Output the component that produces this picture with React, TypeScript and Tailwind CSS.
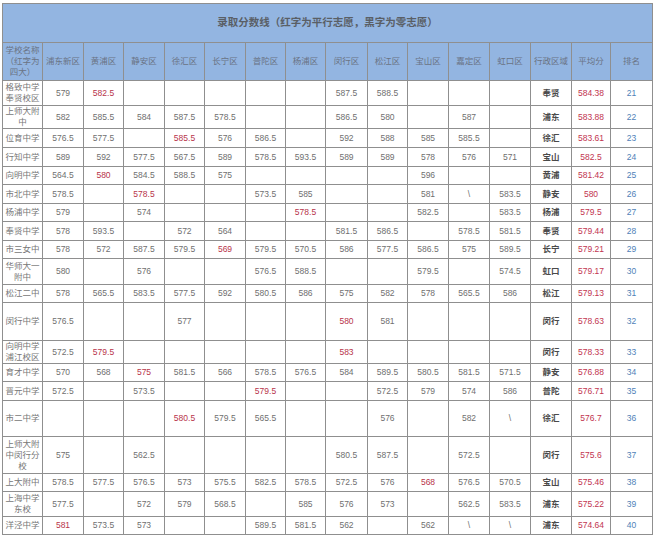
const districts = ['浦东新区', '黄浦区', '静安区', '徐汇区', '长宁区', '普陀区', '杨浦区', '闵行区', '松江区', '宝山区', '嘉定区', '虹口区'];

const colWidths = ['w-[40px]', 'w-[41px]', 'w-[40px]', 'w-[41px]', 'w-[40px]', 'w-[41px]', 'w-[40px]', 'w-[40px]', 'w-[42px]', 'w-[40px]', 'w-[41px]', 'w-[41px]', 'w-[41px]', 'w-[41px]', 'w-[39px]', 'w-[42px]'];

interface Row {
    name: string;
    h: string;
    cells: string[];
    area: string;
    avg: string;
    rank: number;
}

// "r" prefix = red (平行志愿)
const rows: Row[] = [
    { name: '格致中学奉贤校区', h: 'h-[25px]', cells: ['579', 'r582.5', '', '', '', '', '', '587.5', '588.5', '', '', ''], area: '奉贤', avg: '584.38', rank: 21 },
    { name: '上师大附中', h: 'h-[23px]', cells: ['582', '585.5', '584', '587.5', '578.5', '', '', '586.5', '580', '', '587', ''], area: '浦东', avg: '583.88', rank: 22 },
    { name: '位育中学', h: 'h-[19px]', cells: ['576.5', '577.5', '', 'r585.5', '576', '586.5', '', '592', '588', '585', '585.5', ''], area: '徐汇', avg: '583.61', rank: 23 },
    { name: '行知中学', h: 'h-[19px]', cells: ['589', '592', '577.5', '567.5', '589', '578.5', '593.5', '589', '589', '578', '576', '571'], area: '宝山', avg: '582.5', rank: 24 },
    { name: '向明中学', h: 'h-[18px]', cells: ['564.5', 'r580', '584.5', '588.5', '575', '', '', '', '', '596', '', ''], area: '黄浦', avg: '581.42', rank: 25 },
    { name: '市北中学', h: 'h-[19px]', cells: ['578.5', '', 'r578.5', '', '', '573.5', '585', '', '', '581', '\\', '583.5'], area: '静安', avg: '580', rank: 26 },
    { name: '杨浦中学', h: 'h-[18px]', cells: ['579', '', '574', '', '', '', 'r578.5', '', '', '582.5', '', '583.5'], area: '杨浦', avg: '579.5', rank: 27 },
    { name: '奉贤中学', h: 'h-[19px]', cells: ['578', '593.5', '', '572', '564', '', '', '581.5', '586.5', '', '578.5', '581.5'], area: '奉贤', avg: '579.44', rank: 28 },
    { name: '市三女中', h: 'h-[18px]', cells: ['578', '572', '587.5', '579.5', 'r569', '579.5', '570.5', '586', '577.5', '586.5', '575', '589.5'], area: '长宁', avg: '579.21', rank: 29 },
    { name: '华师大一附中', h: 'h-[26px]', cells: ['580', '', '576', '', '', '576.5', '588.5', '', '', '579.5', '', '574.5'], area: '虹口', avg: '579.17', rank: 30 },
    { name: '松江二中', h: 'h-[18px]', cells: ['578', '565.5', '583.5', '577.5', '592', '580.5', '586', '575', '582', '578', '565.5', '586'], area: '松江', avg: '579.13', rank: 31 },
    { name: '闵行中学', h: 'h-[38px]', cells: ['576.5', '', '', '577', '', '', '', 'r580', '581', '', '', ''], area: '闵行', avg: '578.63', rank: 32 },
    { name: '向明中学浦江校区', h: 'h-[22px]', cells: ['572.5', 'r579.5', '', '', '', '', '', 'r583', '', '', '', ''], area: '闵行', avg: '578.33', rank: 33 },
    { name: '育才中学', h: 'h-[18px]', cells: ['570', '568', 'r575', '581.5', '566', '578.5', '576.5', '584', '589.5', '580.5', '581.5', '571.5'], area: '静安', avg: '576.88', rank: 34 },
    { name: '晋元中学', h: 'h-[19px]', cells: ['572.5', '', '573.5', '', '', 'r579.5', '', '', '572.5', '579', '574', '586'], area: '普陀', avg: '576.71', rank: 35 },
    { name: '市二中学', h: 'h-[36px]', cells: ['', '', '', 'r580.5', '579.5', '565.5', '', '', '576', '', '582', '\\'], area: '徐汇', avg: '576.7', rank: 36 },
    { name: '上师大附中闵行分校', h: 'h-[37px]', cells: ['575', '', '562.5', '', '', '', '', '580.5', '587.5', '', '572.5', ''], area: '闵行', avg: '575.6', rank: 37 },
    { name: '上大附中', h: 'h-[18px]', cells: ['578.5', '577.5', '576.5', '573', '575.5', '582.5', '578.5', '572.5', '576', 'r568', '576.5', '570.5'], area: '宝山', avg: '575.46', rank: 38 },
    { name: '上海中学东校', h: 'h-[25px]', cells: ['577.5', '', '572', '579', '568.5', '', '585', '576', '573', '', '562.5', '583.5'], area: '浦东', avg: '575.22', rank: 39 },
    { name: '洋泾中学', h: 'h-[18px]', cells: ['r581', '573.5', '573', '', '', '589.5', '581.5', '562', '', '562', '\\', '\\'], area: '浦东', avg: '574.64', rank: 40 },
];

const cell = 'border border-[#8f8f8f] p-0 text-center align-middle';

export default function App() {
    return (
        <div className="min-h-[536px] w-[654px] bg-white px-[2px] pt-[3px] font-['Liberation_Sans','Noto_Sans_CJK_SC',sans-serif]">
            <table className="w-[650px] table-fixed border-collapse border border-[#7a7a7a]">
                <colgroup>
                    {colWidths.map((w, i) => (
                        <col key={i} className={w} />
                    ))}
                </colgroup>
                <tbody>
                    <tr className="h-[39px] bg-[#93b5e1]">
                        <td colSpan={16} className={`${cell} text-[10.5px] font-bold text-[#5a5f66]`}>
                            录取分数线（红字为平行志愿，黑字为零志愿）
                        </td>
                    </tr>
                    <tr className="h-[38px] bg-[#93b5e1] text-[8.5px] leading-[11px] text-[#6a7384]">
                        <td className={`${cell} px-[1px]`}>学校名称（红字为四大）</td>
                        {districts.map((d) => (
                            <td key={d} className={cell}>
                                {d}
                            </td>
                        ))}
                        <td className={cell}>行政区域</td>
                        <td className={cell}>平均分</td>
                        <td className={cell}>排名</td>
                    </tr>
                    {rows.map((r) => (
                        <tr key={r.rank} className={`${r.h} text-[8.5px] leading-[11px] text-[#6f6f6f]`}>
                            <td className={`${cell} px-[1px] text-[#777]`}>{r.name}</td>
                            {r.cells.map((c, i) => {
                                const red = c.startsWith('r');
                                return (
                                    <td key={i} className={`${cell} ${red ? 'text-[#b8344a]' : ''}`}>
                                        {red ? c.slice(1) : c}
                                    </td>
                                );
                            })}
                            <td className={`${cell} font-bold text-[#4a4a4a]`}>{r.area}</td>
                            <td className={`${cell} text-[#c2344f]`}>{r.avg}</td>
                            <td className={`${cell} text-[#4f7fb8]`}>{r.rank}</td>
                        </tr>
                    ))}
                </tbody>
            </table>
        </div>
    );
}
